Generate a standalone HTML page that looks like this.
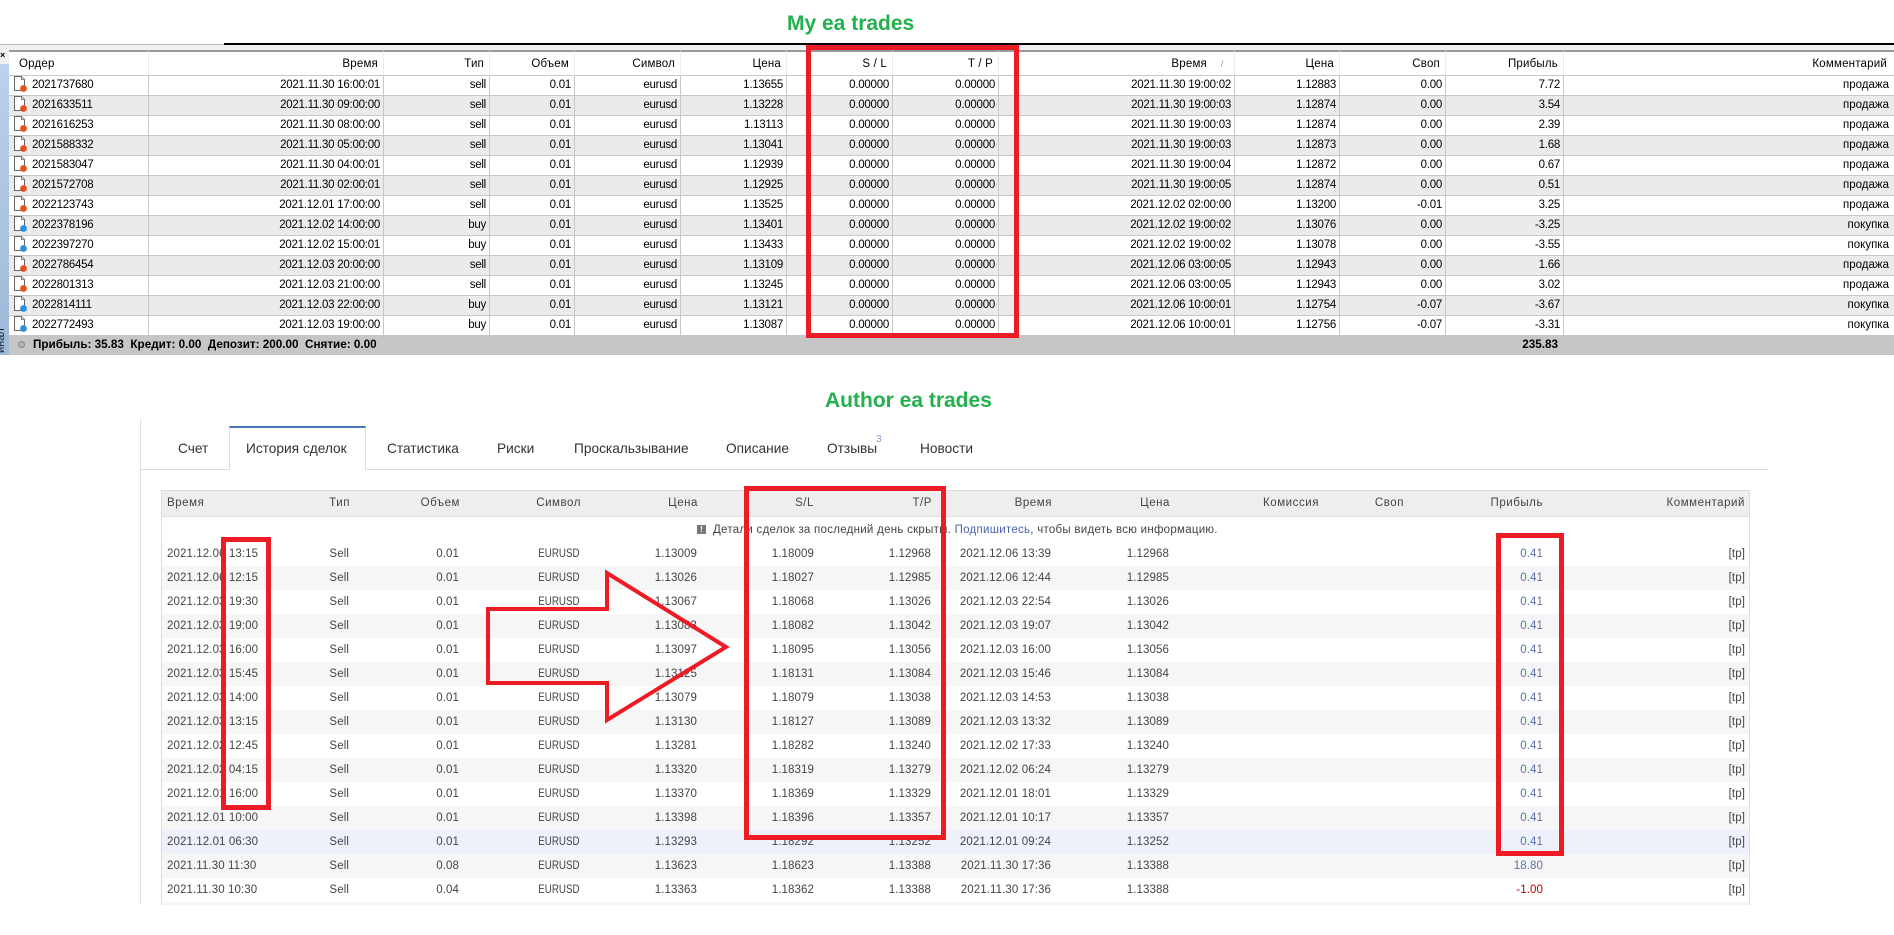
<!DOCTYPE html>
<html><head><meta charset="utf-8"><title>EA trades</title>
<style>
html,body{margin:0;padding:0;background:#fff}
body{width:1894px;height:935px;position:relative;overflow:hidden;font-family:"Liberation Sans",Arial,sans-serif}
.a{position:absolute}
.title{position:absolute;font-weight:bold;font-size:21px;line-height:24px;color:#22b14c;white-space:nowrap}
table{border-collapse:separate;border-spacing:0;table-layout:fixed;position:absolute}
#t1{left:9px;top:50px;width:1885px;font-size:11.5px;letter-spacing:-.25px;color:#000}
#t1 th{font-weight:normal;height:23px;padding:0 5px 0 0;text-align:right;letter-spacing:.2px;border-top:2px solid #999;border-bottom:1px solid #c8c8c8;border-right:1px solid #ececec;box-sizing:content-box;overflow:hidden;white-space:nowrap}
#t1 th:first-child{text-align:left;padding-left:10px}
#t1 td{height:19px;padding:0 3px 0 0;text-align:right;border-bottom:1px solid #c8c8c8;border-right:1px solid #c8c8c8;white-space:nowrap;overflow:hidden;line-height:19px}
#t1 td:first-child{text-align:left;padding-left:4px;border-left:0}
#t1 td:last-child{border-right:0;padding-right:5px;letter-spacing:0}
#t1 th:last-child{border-right:0;padding-right:7px}
#t1 tr:nth-child(even) td{background:#ebebeb}
#t1 svg{vertical-align:-4px;margin-right:5px}
.tab{position:absolute;top:441px;font-size:13.7px;line-height:16px;color:#333;white-space:nowrap}
#t3 td{height:24px;padding:0 5px 0 0;text-align:right;white-space:nowrap;background:#fff}
#t3 td:first-child{text-align:left;padding-left:6px}
#t3 td:nth-child(12){color:#5b72a8}
#t3 tr.s td{background:#f6f6f6}
#t3 tr.b td{background:#eef1f9}
.e{display:inline-block;transform:scaleX(.85);transform-origin:100% 50%;letter-spacing:0}
</style></head><body>
<svg width="0" height="0" style="position:absolute"><defs>
<symbol id="r" viewBox="0 0 14 16"><path d="M1.5 .5H8.5L11.5 3.5V14.5H1.5Z" fill="#fff" stroke="#666"/><path d="M8.5 .5V3.5H11.5" fill="#ddd" stroke="#888"/><circle cx="10.5" cy="12.5" r="3.4" fill="#e5501c"/></symbol>
<symbol id="b" viewBox="0 0 14 16"><path d="M1.5 .5H8.5L11.5 3.5V14.5H1.5Z" fill="#fff" stroke="#666"/><path d="M8.5 .5V3.5H11.5" fill="#ddd" stroke="#888"/><circle cx="10.5" cy="12.5" r="3.4" fill="#2a8ee0"/></symbol>
</defs></svg>

<div class="title" style="left:787px;top:12px">My ea trades</div>

<div class="a" style="left:0;top:44px;width:1894px;height:6px;background:#f0f0f0"></div>
<div class="a" style="left:0;top:44px;width:224px;height:1px;background:#bbb"></div>
<div class="a" style="left:224px;top:43px;width:1670px;height:2px;background:#000"></div>
<div class="a" style="left:0;top:50px;width:9px;height:14px;background:#f0f0f0;font:bold 9px/10px 'Liberation Sans',sans-serif;color:#000">×</div>
<div class="a" style="left:0;top:64px;width:9px;height:291px;background:linear-gradient(#bcd1ea,#9db9d8);overflow:hidden"><span class="a" style="left:-14px;top:268px;font-size:11px;line-height:12px;color:#123;transform:rotate(-90deg);width:30px;text-align:left">инал</span></div>

<table id="t1">
<colgroup><col style="width:140px"><col style="width:235px"><col style="width:106px"><col style="width:85px"><col style="width:106px"><col style="width:106px"><col style="width:106px"><col style="width:106px"><col style="width:236px"><col style="width:105px"><col style="width:106px"><col style="width:118px"><col style="width:330px"></colgroup>
<thead><tr><th>Ордер</th><th>Время</th><th>Тип</th><th>Объем</th><th>Символ</th><th>Цена</th><th>S / L</th><th>T / P</th><th>Время<span style="display:inline-block;margin-left:8px;width:14px;text-align:center;color:#888;font-size:9px">/</span></th><th>Цена</th><th>Своп</th><th>Прибыль</th><th>Комментарий</th></tr></thead>
<tbody>
<tr><td><svg width="14" height="16"><use href="#r"/></svg>2021737680</td><td>2021.11.30 16:00:01</td><td>sell</td><td>0.01</td><td>eurusd</td><td>1.13655</td><td>0.00000</td><td>0.00000</td><td>2021.11.30 19:00:02</td><td>1.12883</td><td>0.00</td><td>7.72</td><td>продажа</td></tr>
<tr><td><svg width="14" height="16"><use href="#r"/></svg>2021633511</td><td>2021.11.30 09:00:00</td><td>sell</td><td>0.01</td><td>eurusd</td><td>1.13228</td><td>0.00000</td><td>0.00000</td><td>2021.11.30 19:00:03</td><td>1.12874</td><td>0.00</td><td>3.54</td><td>продажа</td></tr>
<tr><td><svg width="14" height="16"><use href="#r"/></svg>2021616253</td><td>2021.11.30 08:00:00</td><td>sell</td><td>0.01</td><td>eurusd</td><td>1.13113</td><td>0.00000</td><td>0.00000</td><td>2021.11.30 19:00:03</td><td>1.12874</td><td>0.00</td><td>2.39</td><td>продажа</td></tr>
<tr><td><svg width="14" height="16"><use href="#r"/></svg>2021588332</td><td>2021.11.30 05:00:00</td><td>sell</td><td>0.01</td><td>eurusd</td><td>1.13041</td><td>0.00000</td><td>0.00000</td><td>2021.11.30 19:00:03</td><td>1.12873</td><td>0.00</td><td>1.68</td><td>продажа</td></tr>
<tr><td><svg width="14" height="16"><use href="#r"/></svg>2021583047</td><td>2021.11.30 04:00:01</td><td>sell</td><td>0.01</td><td>eurusd</td><td>1.12939</td><td>0.00000</td><td>0.00000</td><td>2021.11.30 19:00:04</td><td>1.12872</td><td>0.00</td><td>0.67</td><td>продажа</td></tr>
<tr><td><svg width="14" height="16"><use href="#r"/></svg>2021572708</td><td>2021.11.30 02:00:01</td><td>sell</td><td>0.01</td><td>eurusd</td><td>1.12925</td><td>0.00000</td><td>0.00000</td><td>2021.11.30 19:00:05</td><td>1.12874</td><td>0.00</td><td>0.51</td><td>продажа</td></tr>
<tr><td><svg width="14" height="16"><use href="#r"/></svg>2022123743</td><td>2021.12.01 17:00:00</td><td>sell</td><td>0.01</td><td>eurusd</td><td>1.13525</td><td>0.00000</td><td>0.00000</td><td>2021.12.02 02:00:00</td><td>1.13200</td><td>-0.01</td><td>3.25</td><td>продажа</td></tr>
<tr><td><svg width="14" height="16"><use href="#b"/></svg>2022378196</td><td>2021.12.02 14:00:00</td><td>buy</td><td>0.01</td><td>eurusd</td><td>1.13401</td><td>0.00000</td><td>0.00000</td><td>2021.12.02 19:00:02</td><td>1.13076</td><td>0.00</td><td>-3.25</td><td>покупка</td></tr>
<tr><td><svg width="14" height="16"><use href="#b"/></svg>2022397270</td><td>2021.12.02 15:00:01</td><td>buy</td><td>0.01</td><td>eurusd</td><td>1.13433</td><td>0.00000</td><td>0.00000</td><td>2021.12.02 19:00:02</td><td>1.13078</td><td>0.00</td><td>-3.55</td><td>покупка</td></tr>
<tr><td><svg width="14" height="16"><use href="#r"/></svg>2022786454</td><td>2021.12.03 20:00:00</td><td>sell</td><td>0.01</td><td>eurusd</td><td>1.13109</td><td>0.00000</td><td>0.00000</td><td>2021.12.06 03:00:05</td><td>1.12943</td><td>0.00</td><td>1.66</td><td>продажа</td></tr>
<tr><td><svg width="14" height="16"><use href="#r"/></svg>2022801313</td><td>2021.12.03 21:00:00</td><td>sell</td><td>0.01</td><td>eurusd</td><td>1.13245</td><td>0.00000</td><td>0.00000</td><td>2021.12.06 03:00:05</td><td>1.12943</td><td>0.00</td><td>3.02</td><td>продажа</td></tr>
<tr><td><svg width="14" height="16"><use href="#b"/></svg>2022814111</td><td>2021.12.03 22:00:00</td><td>buy</td><td>0.01</td><td>eurusd</td><td>1.13121</td><td>0.00000</td><td>0.00000</td><td>2021.12.06 10:00:01</td><td>1.12754</td><td>-0.07</td><td>-3.67</td><td>покупка</td></tr>
<tr><td><svg width="14" height="16"><use href="#b"/></svg>2022772493</td><td>2021.12.03 19:00:00</td><td>buy</td><td>0.01</td><td>eurusd</td><td>1.13087</td><td>0.00000</td><td>0.00000</td><td>2021.12.06 10:00:01</td><td>1.12756</td><td>-0.07</td><td>-3.31</td><td>покупка</td></tr>
</tbody></table>

<div class="a" style="left:9px;top:335px;width:1885px;height:20px;background:#c6c6c6;font-size:11.7px;font-weight:bold;line-height:20px;color:#000;white-space:pre"><span class="a" style="left:9px;top:6px;width:7px;height:7px;border-radius:50%;background:#b5b5b5;border:1px solid #8a8a8a;box-sizing:border-box"></span><span class="a" style="left:24px">Прибыль: 35.83  Кредит: 0.00  Депозит: 200.00  Снятие: 0.00</span><span class="a" style="right:336px">235.83</span></div>

<div class="title" style="left:825px;top:389px">Author ea trades</div>

<div class="a" style="left:140px;top:419px;width:1px;height:486px;background:#e0e0e0"></div>
<div class="a" style="left:140px;top:469px;width:1628px;height:1px;background:#dcdcdc"></div>
<div class="a" style="left:229px;top:426px;width:135px;height:42px;border:1px solid #dcdcdc;border-top:2px solid #4a76b8;border-bottom:0;background:#fff"></div>
<span class="tab" style="left:178px">Счет</span>
<span class="tab" style="left:246px">История сделок</span>
<span class="tab" style="left:387px">Статистика</span>
<span class="tab" style="left:497px">Риски</span>
<span class="tab" style="left:574px">Проскальзывание</span>
<span class="tab" style="left:726px">Описание</span>
<span class="tab" style="left:827px">Отзывы</span>
<span class="a" style="left:876px;top:434px;font-size:10px;line-height:12px;color:#7f9fd8">3</span>
<span class="tab" style="left:920px">Новости</span>

<div class="a" style="left:161px;top:490px;width:1589px;height:415px;background:#fff;overflow:hidden;box-sizing:border-box;border-left:1px solid #dcdcdc;border-right:1px solid #dcdcdc;border-top:1px solid #dcdcdc">
<div class="a" style="left:0;top:0;right:0;height:25px;background:#eee;border-bottom:1px solid #dcdcdc;font-size:11.5px;letter-spacing:.55px;line-height:25px;color:#444;white-space:nowrap">
<span class="a" style="left:5px">Время</span>
<span class="a" style="right:1399px">Тип</span>
<span class="a" style="right:1289px">Объем</span>
<span class="a" style="right:1168px">Символ</span>
<span class="a" style="right:1051px">Цена</span>
<span class="a" style="right:935px">S/L</span>
<span class="a" style="right:817px">T/P</span>
<span class="a" style="right:697px">Время</span>
<span class="a" style="right:579px">Цена</span>
<span class="a" style="right:430px">Комиссия</span>
<span class="a" style="right:345px">Своп</span>
<span class="a" style="right:206px">Прибыль</span>
<span class="a" style="right:4px">Комментарий</span>
</div>
<div class="a" style="left:535px;top:34px;width:9px;height:9px;background:#777;color:#fff;font:bold 8px/9px 'Liberation Sans',sans-serif;text-align:center">!</div>
<div class="a" style="left:551px;top:31px;font-size:11.5px;letter-spacing:.27px;line-height:16px;color:#444;white-space:nowrap">Детали сделок за последний день скрыты. <span style="color:#4a62a8">Подпишитесь</span>, чтобы видеть всю информацию.</div>
<table style="left:-1px;top:51px;width:1589px;font-size:11.5px;letter-spacing:.1px;color:#444" id="t3">
<colgroup><col style="width:126px"><col style="width:67px"><col style="width:110px"><col style="width:121px"><col style="width:117px"><col style="width:117px"><col style="width:117px"><col style="width:120px"><col style="width:118px"><col style="width:150px"><col style="width:84px"><col style="width:140px"><col style="width:202px"></colgroup>
<tbody>
<tr><td>2021.12.06 13:15</td><td>Sell</td><td>0.01</td><td><span class="e">EURUSD</span></td><td>1.13009</td><td>1.18009</td><td>1.12968</td><td>2021.12.06 13:39</td><td>1.12968</td><td></td><td></td><td>0.41</td><td>[tp]</td></tr>
<tr class="s"><td>2021.12.06 12:15</td><td>Sell</td><td>0.01</td><td><span class="e">EURUSD</span></td><td>1.13026</td><td>1.18027</td><td>1.12985</td><td>2021.12.06 12:44</td><td>1.12985</td><td></td><td></td><td>0.41</td><td>[tp]</td></tr>
<tr><td>2021.12.03 19:30</td><td>Sell</td><td>0.01</td><td><span class="e">EURUSD</span></td><td>1.13067</td><td>1.18068</td><td>1.13026</td><td>2021.12.03 22:54</td><td>1.13026</td><td></td><td></td><td>0.41</td><td>[tp]</td></tr>
<tr class="s"><td>2021.12.03 19:00</td><td>Sell</td><td>0.01</td><td><span class="e">EURUSD</span></td><td>1.13083</td><td>1.18082</td><td>1.13042</td><td>2021.12.03 19:07</td><td>1.13042</td><td></td><td></td><td>0.41</td><td>[tp]</td></tr>
<tr><td>2021.12.03 16:00</td><td>Sell</td><td>0.01</td><td><span class="e">EURUSD</span></td><td>1.13097</td><td>1.18095</td><td>1.13056</td><td>2021.12.03 16:00</td><td>1.13056</td><td></td><td></td><td>0.41</td><td>[tp]</td></tr>
<tr class="s"><td>2021.12.03 15:45</td><td>Sell</td><td>0.01</td><td><span class="e">EURUSD</span></td><td>1.13125</td><td>1.18131</td><td>1.13084</td><td>2021.12.03 15:46</td><td>1.13084</td><td></td><td></td><td>0.41</td><td>[tp]</td></tr>
<tr><td>2021.12.03 14:00</td><td>Sell</td><td>0.01</td><td><span class="e">EURUSD</span></td><td>1.13079</td><td>1.18079</td><td>1.13038</td><td>2021.12.03 14:53</td><td>1.13038</td><td></td><td></td><td>0.41</td><td>[tp]</td></tr>
<tr class="s"><td>2021.12.03 13:15</td><td>Sell</td><td>0.01</td><td><span class="e">EURUSD</span></td><td>1.13130</td><td>1.18127</td><td>1.13089</td><td>2021.12.03 13:32</td><td>1.13089</td><td></td><td></td><td>0.41</td><td>[tp]</td></tr>
<tr><td>2021.12.02 12:45</td><td>Sell</td><td>0.01</td><td><span class="e">EURUSD</span></td><td>1.13281</td><td>1.18282</td><td>1.13240</td><td>2021.12.02 17:33</td><td>1.13240</td><td></td><td></td><td>0.41</td><td>[tp]</td></tr>
<tr class="s"><td>2021.12.02 04:15</td><td>Sell</td><td>0.01</td><td><span class="e">EURUSD</span></td><td>1.13320</td><td>1.18319</td><td>1.13279</td><td>2021.12.02 06:24</td><td>1.13279</td><td></td><td></td><td>0.41</td><td>[tp]</td></tr>
<tr><td>2021.12.01 16:00</td><td>Sell</td><td>0.01</td><td><span class="e">EURUSD</span></td><td>1.13370</td><td>1.18369</td><td>1.13329</td><td>2021.12.01 18:01</td><td>1.13329</td><td></td><td></td><td>0.41</td><td>[tp]</td></tr>
<tr class="s"><td>2021.12.01 10:00</td><td>Sell</td><td>0.01</td><td><span class="e">EURUSD</span></td><td>1.13398</td><td>1.18396</td><td>1.13357</td><td>2021.12.01 10:17</td><td>1.13357</td><td></td><td></td><td>0.41</td><td>[tp]</td></tr>
<tr class="b"><td>2021.12.01 06:30</td><td>Sell</td><td>0.01</td><td><span class="e">EURUSD</span></td><td>1.13293</td><td>1.18292</td><td>1.13252</td><td>2021.12.01 09:24</td><td>1.13252</td><td></td><td></td><td>0.41</td><td>[tp]</td></tr>
<tr class="s"><td>2021.11.30 11:30</td><td>Sell</td><td>0.08</td><td><span class="e">EURUSD</span></td><td>1.13623</td><td>1.18623</td><td>1.13388</td><td>2021.11.30 17:36</td><td>1.13388</td><td></td><td></td><td>18.80</td><td>[tp]</td></tr>
<tr><td>2021.11.30 10:30</td><td>Sell</td><td>0.04</td><td><span class="e">EURUSD</span></td><td>1.13363</td><td>1.18362</td><td>1.13388</td><td>2021.11.30 17:36</td><td>1.13388</td><td></td><td></td><td style="color:#c00000">-1.00</td><td>[tp]</td></tr>
<tr class="s"><td></td><td></td><td></td><td></td><td></td><td></td><td></td><td></td><td></td><td></td><td></td><td></td><td></td></tr>
</tbody></table>
</div>

<svg class="a" style="left:0;top:0" width="1894" height="935" fill="none" stroke="#ed1c24" stroke-width="5">
<rect x="808.5" y="47.5" width="208" height="288"/>
<rect x="223.5" y="539.5" width="45" height="268"/>
<rect x="746.5" y="488.5" width="197" height="349"/>
<rect x="1498.5" y="535.5" width="63" height="318"/>
<polygon stroke-width="4" points="488,609 607,609 607,573 726,647 607,720 607,683 488,683"/>
</svg>
</body></html>
